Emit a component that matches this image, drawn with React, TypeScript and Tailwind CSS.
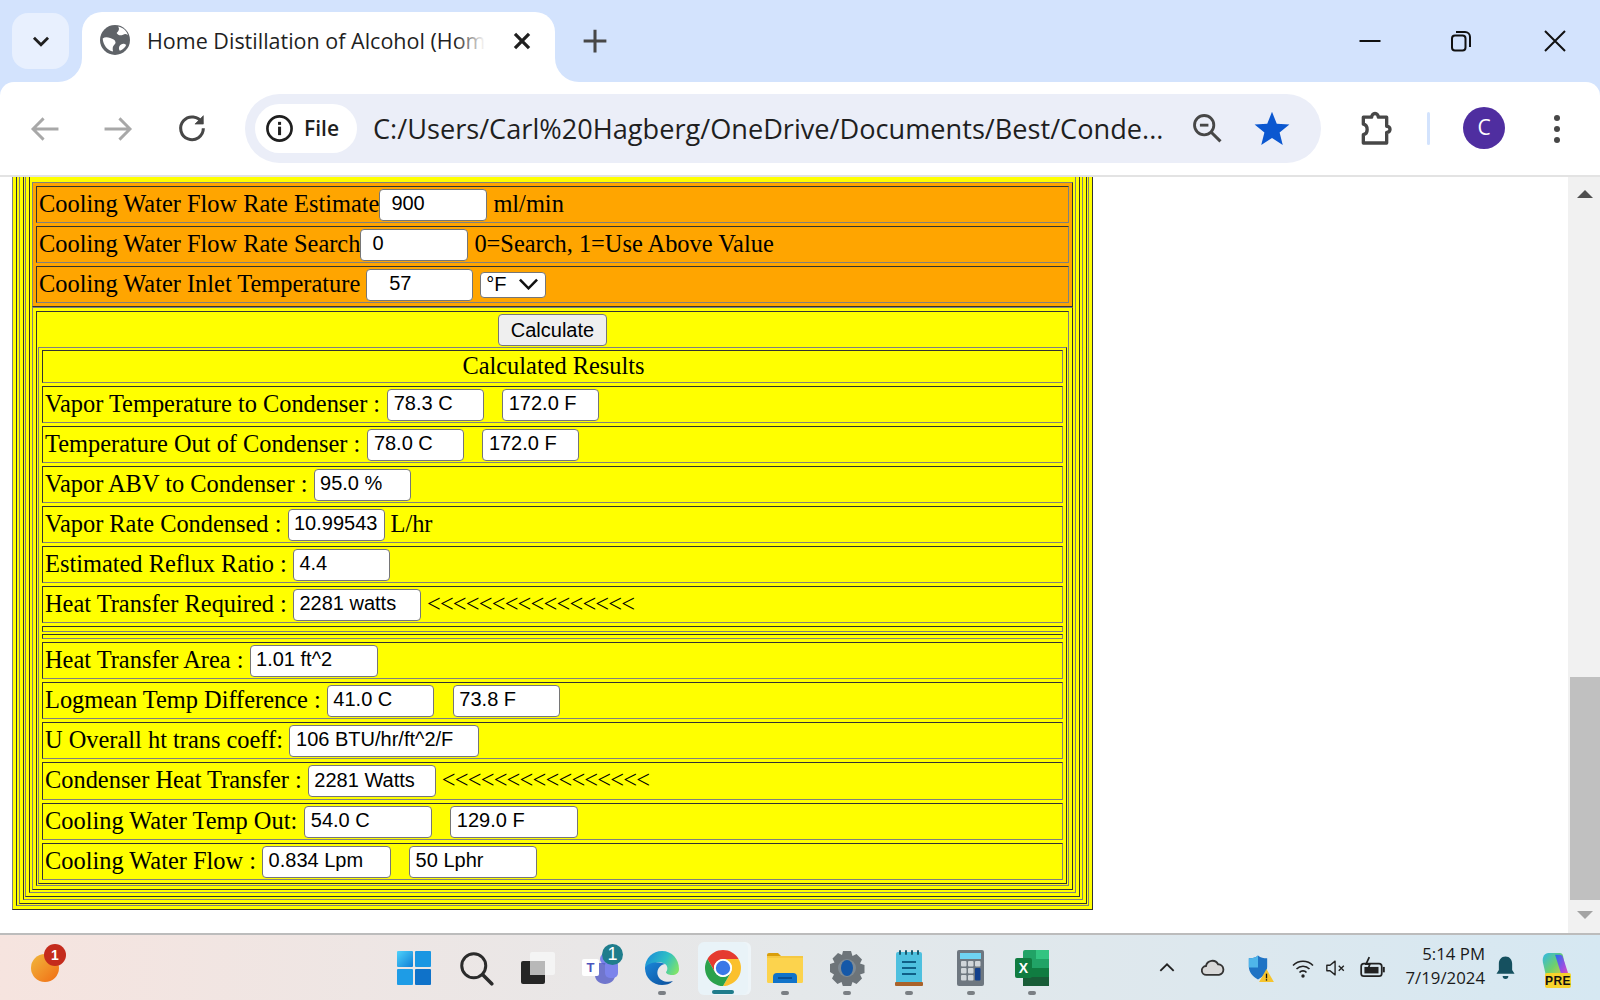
import React from "react";

const TBL = "border border-t-[#808080] border-l-[#808080] border-r-[#333333] border-b-[#333333]";
const CELL = "border border-t-[#333333] border-l-[#333333] border-r-[#808080] border-b-[#808080]";
const INPUT = "flex items-center shrink-0 h-[32px] pb-[3px] bg-white border-[1.5px] border-[#767676] rounded-[4px] text-black font-['Liberation_Sans',sans-serif] text-[20px] whitespace-pre";

function Field({ className, children }: { className: string; children: React.ReactNode }) {
  return <div className={`${INPUT} ${className}`}>{children}</div>;
}

function Row({ className, children }: { className: string; children?: React.ReactNode }) {
  return <div className={`${CELL} flex items-center pl-[2px] whitespace-pre ${className}`}>{children}</div>;
}

function Label({ className = "", children }: { className?: string; children: React.ReactNode }) {
  return <span className={`mb-[1px] ${className}`}>{children}</span>;
}

function Globe() {
  return (
    <svg viewBox="0 0 28 28" className="w-[30px] h-[30px]">
      <circle cx="14" cy="14" r="14" fill="#5f6368" />
      <path d="M17 1.500c1.500 2.500.5 4.500-1.500 6 1.500 2.500 4 2.500 6 1.500 1.800-.9 3-.8 4.500.5C25 5.500 21.500 2.500 17 1.500z" fill="#fff" />
      <path d="M2.500 12.500c2-1.500 4.500-1.500 7-.3 2.500 1.200 4.500 1.500 5 3.800.3 1.700-2 2.500-2.500 4.500-.3 1.300-.2 2.800.2 4.200C7 23.500 3 19 2.500 12.500z" fill="#fff" />
      <path d="M18 20c1-2 3.500-3 5-2.200.6.300 1 .6 1.500.7-1 2.500-3 4.500-6 5.500-.9-1.300-1-2.600-.5-4z" fill="#fff" />
    </svg>
  );
}

function Ic({ size, view = "0 0 24 24", children, className = "" }: { size: number; view?: string; children: React.ReactNode; className?: string }) {
  return (
    <svg viewBox={view} width={size} height={size} className={className} fill="none">
      {children}
    </svg>
  );
}

function ChromeLogo() {
  return (
    <svg viewBox="4 4 40 40" width={36} height={36}>
      <path d="M6.680 14A20 20 0 0 1 41.320 14H24A10 10 0 0 0 15.340 29Z" fill="#e53b30" />
      <path d="M41.320 14A20 20 0 0 1 24 44L32.660 29A10 10 0 0 0 24 14Z" fill="#fbc02d" />
      <path d="M24 44A20 20 0 0 1 6.680 14L15.340 29A10 10 0 0 0 32.660 29Z" fill="#2ba24c" />
      <circle cx="24" cy="24" r="10" fill="#fff" />
      <circle cx="24" cy="24" r="8" fill="#3b78e7" />
    </svg>
  );
}

function WinLogo() {
  return (
    <svg viewBox="0 0 34 34" width={34} height={34}>
      <defs>
        <linearGradient id="w1" x1="0" y1="0" x2="1" y2="1">
          <stop offset="0" stopColor="#4fd2fb" />
          <stop offset="1" stopColor="#0f7fd6" />
        </linearGradient>
      </defs>
      <rect x="0" y="0" width="16" height="16" rx="1" fill="url(#w1)" />
      <rect x="18" y="0" width="16" height="16" rx="1" fill="#1a96e2" />
      <rect x="0" y="18" width="16" height="16" rx="1" fill="#1e9ce6" />
      <rect x="18" y="18" width="16" height="16" rx="1" fill="#0f72c9" />
    </svg>
  );
}

function Edge() {
  return (
    <svg viewBox="0 0 36 36" width={36} height={36}>
      <defs>
        <linearGradient id="e1" x1="0" y1="0.3" x2="1" y2="0.7">
          <stop offset="0" stopColor="#1b8fd8" />
          <stop offset="0.55" stopColor="#2fc0c4" />
          <stop offset="1" stopColor="#7fe36a" />
        </linearGradient>
        <linearGradient id="e2" x1="0" y1="0" x2="1" y2="1">
          <stop offset="0" stopColor="#1a86d8" />
          <stop offset="1" stopColor="#0c4f9c" />
        </linearGradient>
      </defs>
      <path d="M1 18C1 8 9 1 18 1c10 0 17 8 17 18 0 4-3 6-7 6-3 0-6-1-6-3 2-2 2-6-1-8C15 10 6 13 3 22z" fill="url(#e1)" />
      <path d="M1 18c0 10 8 17 17 17 4 0 8-1 11-4-6 2-13 0-15-5-2-5 1-11 7-12C13 11 3 13 1 18z" fill="url(#e2)" />
    </svg>
  );
}

function Teams() {
  return (
    <svg viewBox="0 0 36 36" width={36} height={36}>
      <circle cx="24" cy="9" r="6" fill="#7b83eb" />
      <path d="M13 13h20v12c0 5.500-4.500 9-10 9s-10-3.500-10-9z" fill="#5b62c8" opacity="0.85" />
      <rect x="23" y="10" width="13" height="18" rx="5" fill="#7b83eb" />
      <rect x="0" y="9" width="17" height="17" rx="2" fill="#fff" />
      <text x="8.500" y="22" textAnchor="middle" fontSize="13" fontWeight="700" fill="#4b53bc" fontFamily="'Liberation Sans',sans-serif">T</text>
    </svg>
  );
}

function Explorer() {
  return (
    <svg viewBox="0 0 36 32" width={36} height={32}>
      <path d="M0 3a2 2 0 0 1 2-2h9l4 4h-15z" fill="#d99e0b" />
      <rect x="0" y="4" width="36" height="27" rx="1.500" fill="#fcd34d" />
      <rect x="0" y="4" width="36" height="2" fill="#f5c842" />
      <path d="M6 31v-6a4 4 0 0 1 4-4h16a4 4 0 0 1 4 4v6z" fill="#1173c9" />
      <rect x="11" y="25" width="14" height="2" fill="#0a4f94" />
    </svg>
  );
}

function Gear() {
  return (
    <svg viewBox="0 0 36 36" width={36} height={36}>
      <path d="M14 1h8l1.500 5 4-2 5.500 5.500-2 4 4.500 1.500v8l-4.500 1.500 2 4-5.500 5.500-4-2-1.500 4.500h-8l-1.500-4.500-4 2-5.500-5.500 2-4L1 22v-8l4.500-1.500-2-4L9 3l4 2z" fill="#6d7479" />
      <circle cx="18" cy="18" r="9" fill="#7f8a93" />
      <ellipse cx="18" cy="18" rx="6" ry="8" fill="#1558a8" />
    </svg>
  );
}

function Notepad() {
  return (
    <svg viewBox="0 0 28 36" width={28} height={36}>
      <rect x="1" y="2" width="26" height="32" rx="2" fill="#4ec0df" />
      <rect x="0" y="32" width="28" height="4" rx="1" fill="#a9622a" />
      <rect x="7" y="11" width="14" height="2" fill="#0f5f86" />
      <rect x="7" y="17" width="14" height="2" fill="#0f5f86" />
      <rect x="7" y="23" width="14" height="2" fill="#0f5f86" />
      <rect x="4" y="0" width="2" height="5" rx="1" fill="#16586f" />
      <rect x="10" y="0" width="2" height="5" rx="1" fill="#16586f" />
      <rect x="16" y="0" width="2" height="5" rx="1" fill="#16586f" />
      <rect x="22" y="0" width="2" height="5" rx="1" fill="#16586f" />
    </svg>
  );
}

function Calc() {
  const keys: [number, number, string][] = [
    [4, 11, "#d0d5da"], [11, 11, "#d0d5da"], [18, 11, "#d0d5da"],
    [4, 18, "#d0d5da"], [11, 18, "#d0d5da"],
    [4, 25, "#d0d5da"], [11, 25, "#d0d5da"],
  ];
  return (
    <svg viewBox="0 0 27 36" width={27} height={36}>
      <rect x="0" y="0" width="27" height="36" rx="2" fill="#6e7780" />
      <rect x="3" y="3" width="21" height="6" fill="#6fd3f2" />
      {keys.map(([x, y, c], i) => (
        <rect key={i} x={x} y={y} width="5.500" height="5.500" rx="1" fill={c} />
      ))}
      <rect x="18" y="18" width="5.500" height="12.500" rx="1" fill="#123f8c" />
    </svg>
  );
}

function Excel() {
  return (
    <svg viewBox="0 0 34 36" width={34} height={36}>
      <rect x="8" y="0" width="26" height="36" rx="2" fill="#21a366" />
      <rect x="21" y="0" width="13" height="9" fill="#33c481" />
      <rect x="8" y="9" width="13" height="9" fill="#21a366" />
      <rect x="21" y="9" width="13" height="9" fill="#21a366" />
      <rect x="8" y="18" width="13" height="9" fill="#107c41" />
      <rect x="21" y="18" width="13" height="9" fill="#107c41" />
      <rect x="8" y="27" width="26" height="9" fill="#185c37" />
      <rect x="0" y="8" width="17" height="20" rx="2" fill="#107c41" />
      <text x="8.500" y="23" textAnchor="middle" fontSize="14" fontWeight="700" fill="#fff" fontFamily="'Liberation Sans',sans-serif">X</text>
    </svg>
  );
}

function TbItem({ dot, children }: { dot?: boolean; children: React.ReactNode }) {
  return (
    <div className="relative w-[61.8px] h-full flex items-center justify-center">
      {children}
      {dot && <div className="absolute left-1/2 -translate-x-1/2 top-[56px] w-[8px] h-[4px] rounded-full bg-[#7a7f84]" />}
    </div>
  );
}

const F = "font-['Liberation_Serif',serif]";

export default function App() {
  return (
    <div className="w-[1600px] h-[1000px] overflow-hidden flex flex-col bg-white font-['Open_Sans',sans-serif]">
      {/* Tab strip */}
      <div className="h-[82px] shrink-0 bg-[#d3e3fd] flex items-end relative">
        <div className="absolute z-10 left-[12px] top-[13px] w-[57px] h-[56px] rounded-[16px] bg-[#e8f0fe] flex items-center justify-center">
          <Ic size={26}>
            <path d="M5.500 9 12 15.500 18.500 9" stroke="#1f1f1f" strokeWidth="2.600" />
          </Ic>
        </div>
        <div className="ml-[82px] w-[473px] h-[70px] bg-white rounded-t-[20px] flex items-start pt-[13px] relative">
          <div className="absolute -left-[24px] bottom-0 w-[24px] h-[24px] bg-white">
            <div className="w-full h-full rounded-br-[24px] bg-[#d3e3fd]" />
          </div>
          <div className="absolute -right-[28px] bottom-0 w-[28px] h-[24px] bg-white">
            <div className="w-full h-full rounded-bl-[24px] bg-[#d3e3fd]" />
          </div>
          <div className="ml-[18px] w-[30px] h-[30px]">
            <Globe />
          </div>
          <div className="ml-[17px] mt-[1px] whitespace-nowrap text-[21.5px] leading-[30px] text-[#1f1f1f] relative">
            Home Distillation of Alcohol (Hom
            <div className="absolute right-0 top-0 h-full w-[30px] bg-gradient-to-r from-transparent to-white" />
          </div>
          <Ic size={26} className="absolute left-[427px] top-[16px]">
            <path d="M5.500 5.500 18.500 18.500M18.500 5.500 5.500 18.500" stroke="#1f1f1f" strokeWidth="3" />
          </Ic>
        </div>
        <Ic size={26} className="absolute left-[582px] top-[28px]">
          <path d="M12 1.500v21M1.500 12h21" stroke="#474747" strokeWidth="2.800" />
        </Ic>
        <Ic size={24} className="absolute left-[1358px] top-[29px]">
          <path d="M1.500 12h21" stroke="#111" strokeWidth="2" />
        </Ic>
        <Ic size={24} className="absolute left-[1449px] top-[29px]">
          <rect x="3" y="6.500" width="13.500" height="15" rx="3" stroke="#111" strokeWidth="2" />
          <path d="M7 3h9a5 5 0 0 1 5 5v10" stroke="#111" strokeWidth="2" />
        </Ic>
        <Ic size={24} className="absolute left-[1543px] top-[29px]">
          <path d="M2 2l20 20M22 2 2 22" stroke="#111" strokeWidth="2" />
        </Ic>
      </div>

      {/* Toolbar */}
      <div className="h-[95px] shrink-0 bg-[#d3e3fd] relative">
        <div className="h-full bg-white rounded-t-[14px] border-b-2 border-[#e3e3e3] flex items-center relative">
          <Ic size={34} className="absolute left-[28px] top-[30px]">
            <path d="M21.500 12H3M11 4.500 3.500 12l7.500 7.500" stroke="#a8a8a8" strokeWidth="2" />
          </Ic>
          <Ic size={34} className="absolute left-[101px] top-[30px]">
            <path d="M2.500 12H21M13 4.500l7.500 7.500-7.500 7.500" stroke="#a8a8a8" strokeWidth="2" />
          </Ic>
          <Ic size={32} className="absolute left-[176px] top-[29px]">
            <path d="M19.500 9A8.500 8.500 0 1 0 20.500 13" stroke="#474747" strokeWidth="2.300" />
            <path d="M20.500 3.500V9.800H14.200Z" fill="#474747" stroke="#474747" strokeWidth="0.500" />
          </Ic>
          <div className="absolute left-[245px] top-[12px] w-[1076px] h-[69px] rounded-full bg-[#ebeef8]" />
          <div className="absolute left-[255px] top-[22px] w-[102px] h-[49px] rounded-full bg-white flex items-center pl-[10px]">
            <Ic size={29}>
              <circle cx="12" cy="12" r="10" stroke="#1f1f1f" strokeWidth="2.200" />
              <rect x="10.800" y="10.500" width="2.500" height="7" fill="#1f1f1f" />
              <rect x="10.800" y="6.500" width="2.500" height="2.500" fill="#1f1f1f" />
            </Ic>
            <span className="ml-[10px] text-[21px] font-semibold text-[#1f1f1f]">File</span>
          </div>
          <div className="absolute left-[373px] top-[23px] h-[49px] flex items-center text-[27.15px] text-[#1f1f1f] whitespace-nowrap">
            C:/Users/Carl%20Hagberg/OneDrive/Documents/Best/Conde...
          </div>
          <Ic size={34} className="absolute left-[1190px] top-[29px]">
            <circle cx="10" cy="10" r="6.800" stroke="#474747" strokeWidth="2" />
            <path d="M15 15l6.500 6.500" stroke="#474747" strokeWidth="2.200" />
            <path d="M7 10h6" stroke="#474747" strokeWidth="2" />
          </Ic>
          <Ic size={38} className="absolute left-[1253px] top-[27px]">
            <path d="M12 1.800 15 9.300l8 .5-6.200 5.100 2 7.800L12 18.300l-6.800 4.400 2-7.800L1 9.800l8-.5z" fill="#0b57d0" />
          </Ic>
          <Ic size={40} className="absolute left-[1355px] top-[26px]">
            <path d="M5 5.500h5c0-1.200.8-2.200 2-2.200s2 1 2 2.200h5v5.500c1.200 0 2 .6 2 1.800s-.8 1.800-2 1.800v6.400H5v-5c1.500-.3 2.300-1.400 2.300-3S6.500 10 5 9.700z" stroke="#474747" strokeWidth="2" strokeLinejoin="round" />
          </Ic>
          <div className="absolute left-[1427px] top-[30px] w-[3px] h-[33px] rounded bg-[#d3e3fd]" />
          <div className="absolute left-[1463px] top-[25px] w-[42px] h-[42px] rounded-full bg-[#4f2ea0] flex items-center justify-center text-white text-[21px]">C</div>
          <div className="absolute left-[1554px] top-[33px] w-[6px] h-[6px] rounded-full bg-[#474747]" />
          <div className="absolute left-[1554px] top-[44px] w-[6px] h-[6px] rounded-full bg-[#474747]" />
          <div className="absolute left-[1554px] top-[55px] w-[6px] h-[6px] rounded-full bg-[#474747]" />
        </div>
      </div>

      {/* Page viewport */}
      <div className="flex-1 min-h-0 flex overflow-hidden bg-white">
        <div className={`flex-1 min-w-0 pl-[12px] text-[24.4px] text-black ${F}`}>
          <div className={`w-[1081px] bg-[#ffff00] ${TBL} border-t-0 pl-[3px] pr-[3px] pb-[3px]`}>
            <div className={`${CELL} border-t-0 pl-[2px] pr-[1px] pb-[1px]`}>
              <div className={`${TBL} border-t-0 pl-[3px] pr-[3px] pb-[3px]`}>
                <div className={`${CELL} border-t-0 pl-[1px] pr-[2px] pb-[2px]`}>
                  <div className={`${TBL} border-t-0 pl-[3px] pr-[3px] pb-[3px]`}>
                    <div className={`${CELL} border-t-0 pl-[2px] pr-[2px] pb-[2px] pt-[5px]`}>
                      {/* Orange table */}
                      <div className={`${TBL} bg-[#ffa500] p-[3px] flex flex-col gap-[3px]`}>
                        <Row className="h-[37px]">
                          <Label>Cooling Water Flow Rate Estimate</Label>
                          <Field className="w-[108px] pl-[11px]">900</Field>
                          <Label className="ml-[6px]">ml/min</Label>
                        </Row>
                        <Row className="h-[37px]">
                          <Label>Cooling Water Flow Rate Search</Label>
                          <Field className="w-[108px] pl-[11px]">0</Field>
                          <Label className="ml-[6px]">0=Search, 1=Use Above Value</Label>
                        </Row>
                        <Row className="h-[37px]">
                          <Label>Cooling Water Inlet Temperature</Label>
                          <Field className="ml-[6px] w-[107px] pl-[22px]">57</Field>
                          <div className="ml-[7px] flex items-center h-[26px] w-[66px] pb-[2px] bg-white border-[1.5px] border-[#767676] rounded-[4px] pl-[5px] font-['Liberation_Sans',sans-serif] text-[20px] relative">
                            °F
                            <svg viewBox="0 0 24 14" className="absolute left-[37px] top-[5px] w-[21px] h-[12px]" fill="none">
                              <path d="M2 2l10 10L22 2" stroke="#111" strokeWidth="3" />
                            </svg>
                          </div>
                        </Row>
                      </div>
                      {/* Yellow table */}
                      <div className={`${TBL} p-[3px]`}>
                        <div className={`${CELL} pt-[2px] pl-[1px] pr-[1px] pb-[1px] flex flex-col`}>
                          <button className="self-center w-[109px] h-[32px] pb-[3px] bg-[#efefef] border-[1.5px] border-[#767676] rounded-[4px] font-['Liberation_Sans',sans-serif] text-[20px] text-black">
                            Calculate
                          </button>
                          <div className={`${TBL} mt-[1px] pt-[2px] pb-[3px] px-[3px] flex flex-col gap-[3px]`}>
                            <Row className="h-[33px] justify-center"><Label>Calculated Results</Label></Row>
                            <Row className="h-[37px]">
                              <Label>Vapor Temperature to Condenser : </Label>
                              <Field className="ml-[1px] w-[97px] pl-[5.500px]">78.3 C</Field>
                              <Field className="ml-[18px] w-[97px] pl-[5.500px]">172.0 F</Field>
                            </Row>
                            <Row className="h-[37px]">
                              <Label>Temperature Out of Condenser : </Label>
                              <Field className="ml-[1px] w-[97px] pl-[5.500px]">78.0 C</Field>
                              <Field className="ml-[18px] w-[97px] pl-[5.500px]">172.0 F</Field>
                            </Row>
                            <Row className="h-[37px]">
                              <Label>Vapor ABV to Condenser : </Label>
                              <Field className="w-[97px] pl-[5.500px]">95.0 %</Field>
                            </Row>
                            <Row className="h-[37px]">
                              <Label>Vapor Rate Condensed : </Label>
                              <Field className="w-[97px] pl-[5.500px]">10.99543</Field>
                              <Label className="ml-[6px]">L/hr</Label>
                            </Row>
                            <Row className="h-[37px]">
                              <Label>Estimated Reflux Ratio : </Label>
                              <Field className="w-[97px] pl-[5.500px]">4.4</Field>
                            </Row>
                            <Row className="h-[37px]">
                              <Label>Heat Transfer Required : </Label>
                              <Field className="w-[128px] pl-[5.500px]">2281 watts</Field>
                              <Label className="ml-[6px] tracking-[-0.8px]">&lt;&lt;&lt;&lt;&lt;&lt;&lt;&lt;&lt;&lt;&lt;&lt;&lt;&lt;&lt;&lt;</Label>
                            </Row>
                            <div className={`${CELL} h-[6px] -mb-[1px]`} />
                            <div className={`${CELL} h-[5px]`} />
                            <Row className="h-[37px]">
                              <Label>Heat Transfer Area : </Label>
                              <Field className="w-[128px] pl-[5.500px]">1.01 ft^2</Field>
                            </Row>
                            <Row className="h-[37px]">
                              <Label>Logmean Temp Difference : </Label>
                              <Field className="w-[107px] pl-[5.500px]">41.0 C</Field>
                              <Field className="ml-[19px] w-[107px] pl-[5.500px]">73.8 F</Field>
                            </Row>
                            <Row className="h-[37px]">
                              <Label>U Overall ht trans coeff: </Label>
                              <Field className="w-[190px] pl-[6px]">106 BTU/hr/ft^2/F</Field>
                            </Row>
                            <Row className="h-[38px]">
                              <Label>Condenser Heat Transfer : </Label>
                              <Field className="w-[128px] pl-[5.500px]">2281 Watts</Field>
                              <Label className="ml-[6px] tracking-[-0.8px]">&lt;&lt;&lt;&lt;&lt;&lt;&lt;&lt;&lt;&lt;&lt;&lt;&lt;&lt;&lt;&lt;</Label>
                            </Row>
                            <Row className="h-[37px]">
                              <Label>Cooling Water Temp Out: </Label>
                              <Field className="ml-[1px] w-[128px] pl-[5.500px]">54.0 C</Field>
                              <Field className="ml-[18px] w-[128px] pl-[5.500px]">129.0 F</Field>
                            </Row>
                            <Row className="h-[37px]">
                              <Label>Cooling Water Flow : </Label>
                              <Field className="w-[129px] pl-[5.500px]">0.834 Lpm</Field>
                              <Field className="ml-[18px] w-[128px] pl-[5.500px]">50 Lphr</Field>
                            </Row>
                          </div>
                        </div>
                      </div>
                    </div>
                  </div>
                </div>
              </div>
            </div>
          </div>
        </div>
        {/* Scrollbar */}
        <div className="w-[32px] shrink-0 bg-[#f1f1f1] flex flex-col items-center relative">
          <div className="absolute left-[2px] right-0 top-[500px] h-[223px] bg-[#c0c0c0]" />
          <svg viewBox="0 0 16 8" className="absolute left-[9px] top-[13px] w-[16px] h-[8px]">
            <path d="M0 8 8 0l8 8z" fill="#505050" />
          </svg>
          <svg viewBox="0 0 16 8" className="absolute left-[9px] top-[734px] w-[16px] h-[8px]">
            <path d="M0 0l8 8 8-8z" fill="#a3a3a3" />
          </svg>
        </div>
      </div>

      {/* Taskbar */}
      <div className="h-[67px] shrink-0 border-t-2 border-[#bcbcbc] bg-gradient-to-r from-[#f6e4df] via-[#e4e8ea] to-[#d6e8f2] flex items-stretch relative">
        <div className="absolute left-[31px] top-[19px] w-[28px] h-[28px] rounded-full bg-gradient-to-br from-[#efb73c] to-[#f06a10]" />
        <div className="absolute left-[44px] top-[9px] w-[22px] h-[22px] rounded-full bg-[#c42b1c] flex items-center justify-center text-white text-[14px] font-bold font-['Liberation_Sans',sans-serif]">1</div>

        <div className="ml-[383.5px] flex h-full">
          <TbItem><WinLogo /></TbItem>
          <TbItem>
            <Ic size={36}>
              <circle cx="10.500" cy="10.500" r="8" stroke="#2b2b2b" strokeWidth="2" />
              <path d="M16.500 16.500 22.500 22.500" stroke="#2b2b2b" strokeWidth="2.400" strokeLinecap="round" />
            </Ic>
          </TbItem>
          <TbItem>
            <svg viewBox="0 0 34 32" width={34} height={32}>
              <rect x="0" y="9" width="24" height="23" rx="2" fill="#262626" />
              <rect x="9" y="0" width="25" height="23" rx="2" fill="#f4f4f4" />
              <rect x="9" y="9" width="15" height="14" fill="#b8b8b8" />
            </svg>
          </TbItem>
          <TbItem>
            <Teams />
            <div className="absolute left-[33px] top-[9px] w-[21px] h-[21px] rounded-full bg-[#1f7d8c] flex items-center justify-center text-white text-[18px] font-['Liberation_Sans',sans-serif]">1</div>
          </TbItem>
          <TbItem dot><Edge /></TbItem>
          <TbItem>
            <div className="absolute left-[6px] top-[7px] w-[50px] h-[53px] rounded-[6px] bg-[#e9f3f8] shadow-[3px_0_0_0_#eef5f9]" />
            <div className="relative"><ChromeLogo /></div>
            <div className="absolute left-1/2 -translate-x-1/2 top-[55px] w-[22px] h-[4px] rounded-full bg-[#1f7d8c]" />
          </TbItem>
          <TbItem dot><Explorer /></TbItem>
          <TbItem dot><Gear /></TbItem>
          <TbItem dot><Notepad /></TbItem>
          <TbItem dot><Calc /></TbItem>
          <TbItem dot><Excel /></TbItem>
        </div>

        <div className="absolute left-[1144px] top-0 h-full flex items-stretch">
          <div className="w-[46px] flex items-center justify-center">
            <Ic size={20}><path d="M4 15.500 12 7.500l8 8" stroke="#222" strokeWidth="2.200" /></Ic>
          </div>
          <div className="w-[45px] flex items-center justify-center">
            <svg viewBox="0 0 26 20" width={24} height={19}>
              <path d="M6 18a4.800 4.800 0 0 1-.6-9.600A7 7 0 0 1 18.500 6.500 5.800 5.800 0 0 1 19.500 18z" fill="#d8d8d8" stroke="#333" strokeWidth="2" />
            </svg>
          </div>
          <div className="w-[46px] flex items-center justify-center relative">
            <svg viewBox="0 0 24 26" width={22} height={25}>
              <path d="M12 0c3 2.500 6 3 10 3v9c0 6-4 11-10 14C6 23 2 18 2 12V3c4 0 7-.5 10-3z" fill="#1f73c4" />
              <path d="M12 0v13H2V3c4 0 7-.5 10-3z" fill="#4fb5ea" />
            </svg>
            <svg viewBox="0 0 16 14" width={15} height={13} className="absolute left-[24px] top-[34px]">
              <path d="M8 0l8 14H0z" fill="#f6c42d" />
              <rect x="7.300" y="5" width="1.400" height="5" fill="#111" />
              <rect x="7.300" y="11" width="1.400" height="1.500" fill="#111" />
            </svg>
          </div>
          <div className="w-[44px] flex items-center justify-center">
            <Ic size={24}>
              <path d="M2 9.500a14 14 0 0 1 20 0M5.500 13a9 9 0 0 1 13 0M8.500 16.500a4.500 4.500 0 0 1 7 0" stroke="#222" strokeWidth="1.600" />
              <circle cx="12" cy="20" r="1.700" fill="#222" />
            </Ic>
          </div>
          <div className="w-[22px] flex items-center justify-center">
            <Ic size={24}>
              <path d="M2 9h3.500L11 4.500v15L5.500 15H2z" stroke="#222" strokeWidth="1.500" strokeLinejoin="round" />
              <path d="M15 9.500l5.500 5.500M20.500 9.500 15 15" stroke="#222" strokeWidth="1.500" />
            </Ic>
          </div>
          <div className="w-[50px] flex items-center justify-center">
            <Ic size={26}>
              <rect x="2" y="8" width="19" height="11.500" rx="2.500" stroke="#222" strokeWidth="1.600" />
              <rect x="5" y="11" width="13" height="6" fill="#222" />
              <rect x="22" y="11" width="1.800" height="5" fill="#222" />
              <path d="M9.500 2 6.500 8.500h3.500L8 14" stroke="#222" strokeWidth="1.600" />
            </Ic>
          </div>
          <div className="w-[88px] flex flex-col items-end justify-center pb-[3px] text-[#1a1a1a] text-[16.8px] leading-[24px]">
            <span>5:14 PM</span>
            <span>7/19/2024</span>
          </div>
          <div className="w-[40px] flex items-center justify-center">
            <svg viewBox="0 0 20 26" width={19} height={26}>
              <path d="M10 1c4.500 0 7 3.500 7 7.500V15l2.500 4H.5L3 15V8.500C3 4.500 5.500 1 10 1z" fill="#15505f" />
              <path d="M7 21.500a3 3 0 0 0 6 0z" fill="#15505f" />
            </svg>
          </div>
          <div className="w-[56px] flex items-center justify-center relative">
            <svg viewBox="0 0 32 32" width={30} height={30} className="ml-[6px] mb-[4px]">
              <defs>
                <linearGradient id="cp" x1="0" y1="0" x2="1" y2="1">
                  <stop offset="0" stopColor="#2fb7e8" />
                  <stop offset="0.5" stopColor="#6fd06a" />
                  <stop offset="1" stopColor="#f0c93a" />
                </linearGradient>
                <linearGradient id="cp2" x1="0" y1="0" x2="1" y2="1">
                  <stop offset="0" stopColor="#1f6ff0" />
                  <stop offset="0.6" stopColor="#a14ce0" />
                  <stop offset="1" stopColor="#f05aa0" />
                </linearGradient>
              </defs>
              <path d="M8 2h12c2 0 3 1 3.500 3L27 24c.5 3-1 5-4 5H10c-3 0-4-1-5-4L2 12C1 6 4 2 8 2z" fill="url(#cp)" />
              <path d="M15 4h5c2 0 3 1 3.500 3L29 24c.5 3-1 5-4 5h-7c3-1 4-3 3-6z" fill="url(#cp2)" />
            </svg>
            <div className="absolute left-[20px] top-[38px] w-[26px] h-[15px] rounded-[2px] bg-[#f7d32c] flex items-center justify-center text-[12px] font-bold text-[#111] font-['Liberation_Sans',sans-serif] tracking-[0.5px]">PRE</div>
          </div>
        </div>
      </div>
    </div>
  );
}
